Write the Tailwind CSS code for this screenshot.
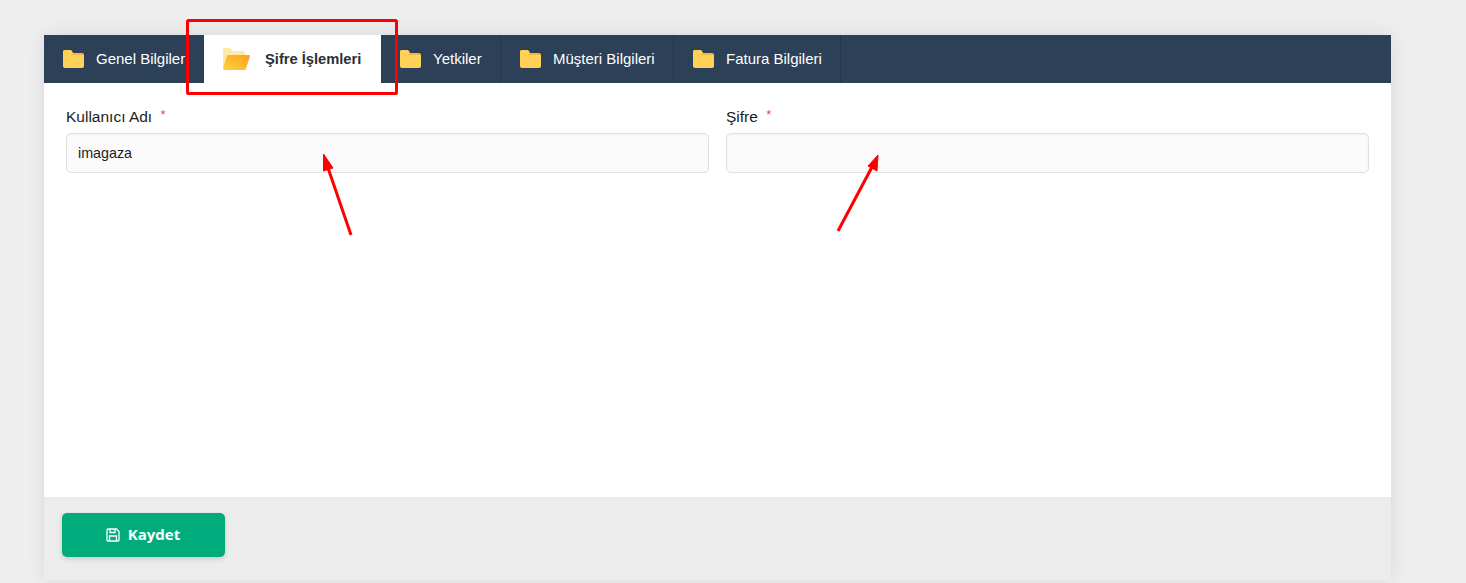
<!DOCTYPE html>
<html lang="tr">
<head>
    <meta charset="UTF-8" />
    <title>Kullanıcı</title>
    <script src="https://cdn.jsdelivr.net/npm/@tailwindcss/browser@4"></script>
</head>
<body class="relative h-[583px] overflow-hidden bg-[#eeeeee] font-['Liberation_Sans',Arial,sans-serif] text-[15px] text-[#1c1c1c]">
<div class="pt-[35px] pl-[44px]">
    <div class="flex h-[545px] w-[1347px] flex-col bg-white shadow-[0_0_18px_rgba(0,0,0,0.09)]">

        <!-- Tabs -->
        <nav class="flex h-[48px] bg-[#2c4058] text-white">
            <a class="flex w-[160px] items-center pl-[19px]">
                <svg class="mr-[12px] h-[18px] w-[21px] shrink-0" viewBox="0 0 21 18"><path d="M0 2a2 2 0 0 1 2-2h6l2 3h9a2 2 0 0 1 2 2v2H0z" fill="#fbb53c"/><path d="M0 5h21v11a2 2 0 0 1-2 2H2a2 2 0 0 1-2-2z" fill="#ffd257"/><path d="M0 2a2 2 0 0 1 2-2h6l2 3-2 2H0z" fill="#ffd257"/></svg>
                <span class="whitespace-nowrap">Genel Bilgiler</span>
            </a>
            <a class="flex w-[177px] items-center bg-white pl-[19px] text-[14.700px] font-bold text-[#2b2f36]">
                <svg class="mr-[15px] h-[22px] w-[27px] shrink-0" viewBox="0 0 27 22"><defs><linearGradient id="open" x1="0" y1="1" x2="1" y2="0"><stop offset="0" stop-color="#ffd23f"/><stop offset="1" stop-color="#fba01e"/></linearGradient></defs><path d="M0 2a2 2 0 0 1 2-2h5l3 3h10a2 2 0 0 1 2 2v3H0z" fill="#fde9a8"/><path d="M0 2h3v18H0z" fill="#fde9a8"/><path d="M5 7h20.500a1.300 1.300 0 0 1 1.300 1.700L23 20.500a2 2 0 0 1-2 1.500H1.500a1.300 1.300 0 0 1-1.300-1.700L3.500 8.500A2 2 0 0 1 5 7z" fill="url(#open)"/></svg>
                <span class="whitespace-nowrap">Şifre İşlemleri</span>
            </a>
            <a class="flex w-[120px] items-center border-r border-[#24364b] pl-[19px]">
                <svg class="mr-[12px] h-[18px] w-[21px] shrink-0" viewBox="0 0 21 18"><path d="M0 2a2 2 0 0 1 2-2h6l2 3h9a2 2 0 0 1 2 2v2H0z" fill="#fbb53c"/><path d="M0 5h21v11a2 2 0 0 1-2 2H2a2 2 0 0 1-2-2z" fill="#ffd257"/><path d="M0 2a2 2 0 0 1 2-2h6l2 3-2 2H0z" fill="#ffd257"/></svg>
                <span class="whitespace-nowrap">Yetkiler</span>
            </a>
            <a class="flex w-[173px] items-center border-r border-[#24364b] pl-[19px]">
                <svg class="mr-[12px] h-[18px] w-[21px] shrink-0" viewBox="0 0 21 18"><path d="M0 2a2 2 0 0 1 2-2h6l2 3h9a2 2 0 0 1 2 2v2H0z" fill="#fbb53c"/><path d="M0 5h21v11a2 2 0 0 1-2 2H2a2 2 0 0 1-2-2z" fill="#ffd257"/><path d="M0 2a2 2 0 0 1 2-2h6l2 3-2 2H0z" fill="#ffd257"/></svg>
                <span class="whitespace-nowrap">Müşteri Bilgileri</span>
            </a>
            <a class="flex w-[167px] items-center border-r border-[#24364b] pl-[19px]">
                <svg class="mr-[12px] h-[18px] w-[21px] shrink-0" viewBox="0 0 21 18"><path d="M0 2a2 2 0 0 1 2-2h6l2 3h9a2 2 0 0 1 2 2v2H0z" fill="#fbb53c"/><path d="M0 5h21v11a2 2 0 0 1-2 2H2a2 2 0 0 1-2-2z" fill="#ffd257"/><path d="M0 2a2 2 0 0 1 2-2h6l2 3-2 2H0z" fill="#ffd257"/></svg>
                <span class="whitespace-nowrap">Fatura Bilgileri</span>
            </a>
        </nav>

        <!-- Form -->
        <div class="grid h-[414px] grid-cols-2 content-start gap-x-[17px] pt-[23px] pr-[22px] pl-[22px]">
            <div>
                <label class="mb-[10px] block h-[17px] text-[15.500px] leading-[17px]">Kullanıcı Adı <span class="ml-[4px] align-[3px] text-[13px] text-[#e0533f]">*</span></label>
                <input type="text" value="imagaza" class="h-[40px] w-full rounded-[5px] border border-[#e0e0e0] bg-[#fbfbfb] px-[11px] text-[14.300px] text-[#1c1c1c] shadow-[inset_0_1px_3px_rgba(0,0,0,0.04)]" />
            </div>
            <div>
                <label class="mb-[10px] block h-[17px] text-[15.500px] leading-[17px]">Şifre <span class="ml-[4px] align-[3px] text-[13px] text-[#e0533f]">*</span></label>
                <input type="password" class="h-[40px] w-full rounded-[5px] border border-[#e0e0e0] bg-[#fbfbfb] px-[11px] shadow-[inset_0_1px_3px_rgba(0,0,0,0.04)]" />
            </div>
        </div>

        <!-- Footer -->
        <div class="flex-1 bg-[#ececec] pt-[16px] pl-[18px]">
            <button class="flex h-[44px] w-[163px] items-center justify-center gap-[8px] rounded-[5px] bg-[#00ab7c] pr-[1px] pb-[2px] font-['Open_Sans',sans-serif] text-[15px] font-bold text-white shadow-[0_2px_5px_rgba(0,0,0,0.15)]">
                <svg class="mt-[2px] h-[14px] w-[14px]" viewBox="0 0 14 14" fill="none" stroke="white" stroke-width="1.300"><path d="M1 2a1 1 0 0 1 1-1h8.500L13 3.500V12a1 1 0 0 1-1 1H2a1 1 0 0 1-1-1z"/><path d="M4 1v3.500h5V1M3.500 13V8h7v5"/></svg>
                Kaydet
            </button>
        </div>
    </div>
</div>

<!-- Red annotations drawn over the screenshot -->
<svg class="pointer-events-none absolute top-0 left-0" width="1466" height="583" fill="none">
    <rect x="187.500" y="20.500" width="209" height="73" rx="1" stroke="#ff0000" stroke-width="3"/>
    <path d="M351 235 L327 165" stroke="#ff0000" stroke-width="3"/>
    <path d="M323.500 154 L333 168 L323.500 171 Z" fill="#ff0000" stroke="#ff0000" stroke-width="1"/>
    <path d="M838 231 L872 167" stroke="#ff0000" stroke-width="3"/>
    <path d="M878 155 L877 171 L868 166 Z" fill="#ff0000" stroke="#ff0000" stroke-width="1"/>
</svg>
</body>
</html>
